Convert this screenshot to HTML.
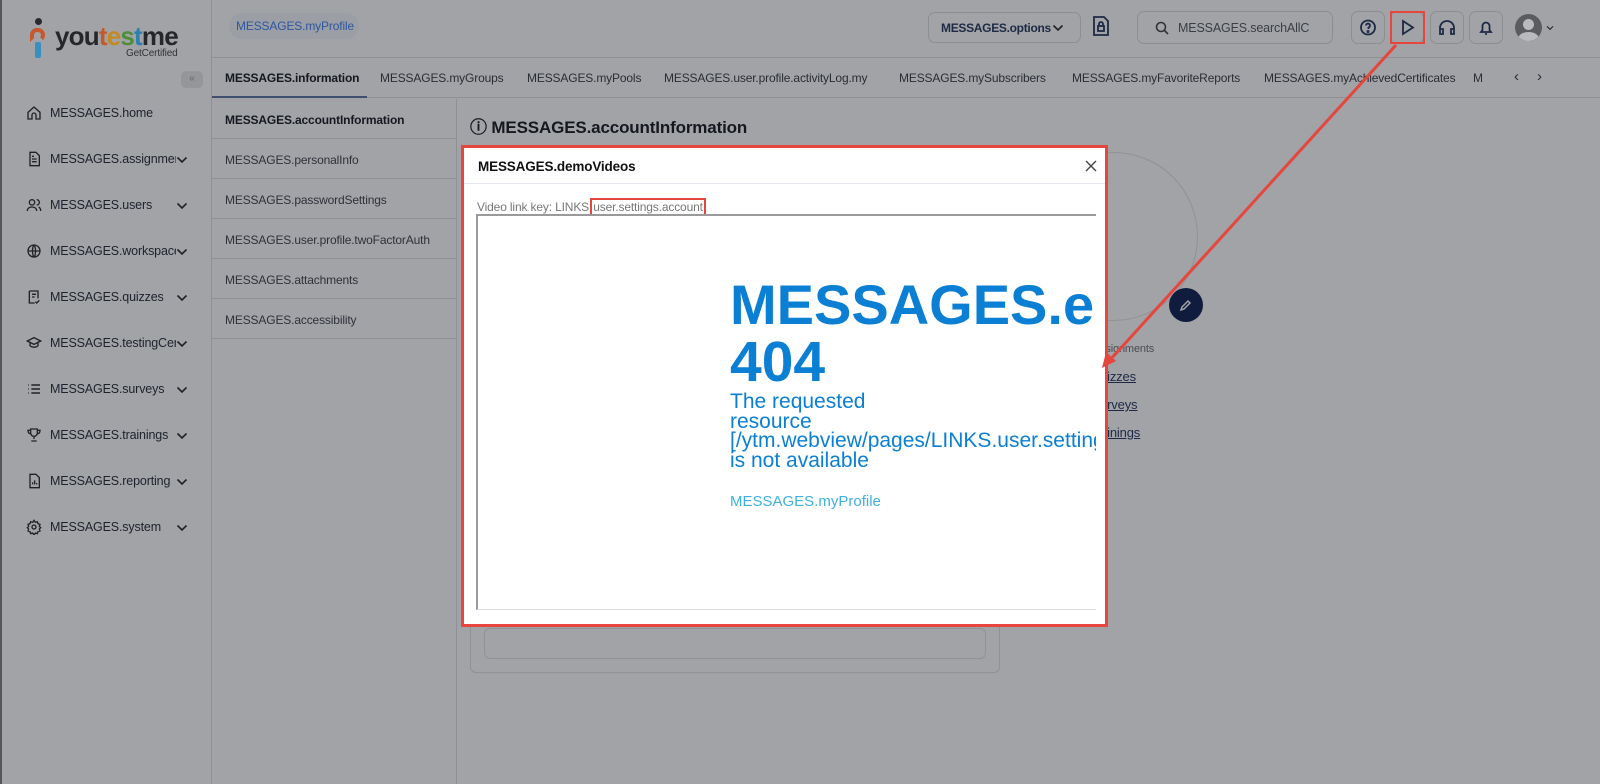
<!DOCTYPE html>
<html><head><meta charset="utf-8"><style>
*{box-sizing:border-box;margin:0;padding:0}
body{width:1600px;height:784px;overflow:hidden;background:#a1a3a7;font-family:"Liberation Sans",sans-serif;color:#1e222b;position:relative;letter-spacing:-0.15px}
.abs{position:absolute}
.side{left:0;top:0;width:212px;height:784px;border-right:1px solid #8e9094;border-left:2px solid #55575b}
.nav{position:absolute;left:24px;font-size:12.5px;color:#1e222b;display:flex;align-items:center;gap:8px;width:150px;overflow:hidden;white-space:nowrap;height:20px}
.nav svg{width:16px;height:16px;flex:none}
.chev{position:absolute;left:174px;width:12px;height:8px}
.top{left:212px;top:0;right:0;height:58px;border-bottom:1px solid #8e9094}
.tabs{left:212px;top:58px;right:0;height:40px;border-bottom:1px solid #8e9094;font-size:12px;color:#2a2d34}
.tabs span{position:absolute;top:13px;white-space:nowrap}
.sub{left:212px;top:99px;width:245px;height:685px;border-right:1px solid #8e9094}
.sub div{height:40px;border-bottom:1px solid #8e9094;font-size:12px;padding:14px 0 0 13px;color:#2e3138}
.btn{position:absolute;top:11px;width:34px;height:33px;border:1px solid #8c8e92;border-radius:7px}
</style></head><body>
<svg width="0" height="0" style="position:absolute"><defs><symbol id="cv" viewBox="0 0 12 8"><path d="M1.5 1.5l4.5 4.5 4.5-4.5" fill="none" stroke="#222" stroke-width="1.6"/></symbol></defs></svg>
<div class="abs side">
 <div class="abs" style="left:28px;top:18px;width:16px;height:44px">
  <div class="abs" style="left:5px;top:0;width:7px;height:7px;border-radius:50%;background:#2a2a2a"></div>
  <div class="abs" style="left:0;top:10px;width:15px;height:14px;border:4px solid #c7572e;border-radius:8px 8px 8px 0;border-bottom-color:transparent"></div>
  <div class="abs" style="left:5px;top:24px;width:6px;height:16px;background:#3a8fc1;border-radius:2px"></div>
 </div>
 <div class="abs" style="left:53px;top:21px;font-size:26px;font-weight:bold;letter-spacing:-0.8px;color:#26272a">you<span style="color:#c25b2c">t</span><span style="color:#c48a22">e</span><span style="color:#4e8d3a">s</span><span style="color:#2c7fae">t</span>me</div>
 <div class="abs" style="left:124px;top:48px;font-size:10px;color:#333">GetCertified</div>
 <div class="abs" style="left:179px;top:71px;width:22px;height:17px;background:#94969a;border-radius:5px;font-size:10px;color:#666;text-align:center;line-height:16px">«</div>
 <div class="nav" style="top:103px"><svg viewBox="0 0 24 24" fill="none" stroke="#222" stroke-width="2"><path d="M3 11l9-8 9 8v10h-6v-6a3 3 0 0 0-6 0v6H3z"/></svg>MESSAGES.home</div>
 <div class="nav" style="top:149px"><svg viewBox="0 0 24 24" fill="none" stroke="#222" stroke-width="2"><path d="M6 2h9l5 5v15H6z M9 12h7M9 16h7M9 8h3"/></svg>MESSAGES.assignments</div><svg class="chev" style="top:156px"><use href="#cv"/></svg>
 <div class="nav" style="top:195px"><svg viewBox="0 0 24 24" fill="none" stroke="#222" stroke-width="2"><circle cx="9" cy="8" r="4"/><path d="M2 21c0-4 3-6 7-6s7 2 7 6M16 4a4 4 0 0 1 0 8M19 15c2 1 3 3 3 6"/></svg>MESSAGES.users</div><svg class="chev" style="top:202px"><use href="#cv"/></svg>
 <div class="nav" style="top:241px"><svg viewBox="0 0 24 24" fill="none" stroke="#222" stroke-width="2"><circle cx="12" cy="12" r="9"/><path d="M3 12h18M12 3c3 3 3 15 0 18M12 3c-3 3-3 15 0 18"/></svg>MESSAGES.workspace</div><svg class="chev" style="top:248px"><use href="#cv"/></svg>
 <div class="nav" style="top:287px"><svg viewBox="0 0 24 24" fill="none" stroke="#222" stroke-width="2"><path d="M5 3h13v11M5 3v18h8M9 8h6M9 12h4M14 19l2 2 4-4"/></svg>MESSAGES.quizzes</div><svg class="chev" style="top:294px"><use href="#cv"/></svg>
 <div class="nav" style="top:333px"><svg viewBox="0 0 24 24" fill="none" stroke="#222" stroke-width="2"><path d="M2 9l10-5 10 5-10 5z M6 11v5c3 3 9 3 12 0v-5"/></svg>MESSAGES.testingCenter</div><svg class="chev" style="top:340px"><use href="#cv"/></svg>
 <div class="nav" style="top:379px"><svg viewBox="0 0 24 24" fill="none" stroke="#222" stroke-width="2.4"><path d="M3 6h1M3 12h1M3 18h1M8 6h13M8 12h13M8 18h13"/></svg>MESSAGES.surveys</div><svg class="chev" style="top:386px"><use href="#cv"/></svg>
 <div class="nav" style="top:425px"><svg viewBox="0 0 24 24" fill="none" stroke="#222" stroke-width="2"><path d="M7 3h10v6a5 5 0 0 1-10 0zM7 5H3c0 4 2 5 4 5M17 5h4c0 4-2 5-4 5M12 14v4M8 21h8"/></svg>MESSAGES.trainings</div><svg class="chev" style="top:432px"><use href="#cv"/></svg>
 <div class="nav" style="top:471px"><svg viewBox="0 0 24 24" fill="none" stroke="#222" stroke-width="2"><path d="M6 2h9l5 5v15H6z M10 17v-3M13 17v-6M16 17v-2"/></svg>MESSAGES.reporting</div><svg class="chev" style="top:478px"><use href="#cv"/></svg>
 <div class="nav" style="top:517px"><svg viewBox="0 0 24 24" fill="none" stroke="#222" stroke-width="2"><circle cx="12" cy="12" r="3"/><path d="M12 2l2 3 3-1 1 3 3 1-1 3 2 2-2 2 1 3-3 1-1 3-3-1-2 3-2-3-3 1-1-3-3-1 1-3-2-2 2-2-1-3 3-1 1-3 3 1z"/></svg>MESSAGES.system</div><svg class="chev" style="top:524px"><use href="#cv"/></svg>
</div>
<div class="abs top">
 <div class="abs" style="left:17px;top:13px;width:130px;height:26px;background:#9b9ea4;border-radius:13px;font-size:12px;color:#2f56a0;line-height:26px;padding-left:7px">MESSAGES.myProfile</div>
 <div class="abs" style="left:716px;top:12px;width:153px;height:31px;border:1px solid #8c8e92;border-radius:7px;font-size:12px;font-weight:bold;color:#1e2a45;line-height:30px;padding-left:12px;letter-spacing:-0.3px">MESSAGES.options</div>
 <svg class="abs" style="left:840px;top:24px" width="12" height="8"><use href="#cv"/></svg>
 <svg class="abs" style="left:880px;top:15px" width="18" height="22" viewBox="0 0 18 22" fill="none" stroke="#1e2a45" stroke-width="1.8"><path d="M2 2h10l4 4v14H2z"/><rect x="6" y="11" width="6" height="5"/><path d="M7 11V9a2 2 0 0 1 4 0v2"/></svg>
 <div class="abs" style="left:925px;top:11px;width:196px;height:33px;border:1px solid #8c8e92;border-radius:7px;font-size:12.5px;color:#3b3e45;line-height:32px;padding-left:40px">MESSAGES.searchAllC</div>
 <svg class="abs" style="left:943px;top:21px" width="14" height="14" viewBox="0 0 14 14" fill="none" stroke="#333" stroke-width="1.6"><circle cx="6" cy="6" r="4.5"/><path d="M9.5 9.5l3.5 3.5"/></svg>
 <div class="btn" style="left:1139px"><svg width="32" height="31" viewBox="0 0 32 31" fill="none" stroke="#1e2a45" stroke-width="1.8"><circle cx="16" cy="15.5" r="7"/><path d="M14 13.5a2 2 0 1 1 2.5 2v1.5"/><circle cx="16" cy="19.5" r=".6"/></svg></div>
 <div class="btn" style="left:1178px"><svg width="32" height="31" viewBox="0 0 32 31" fill="none" stroke="#1e2a45" stroke-width="1.8"><path d="M12 9l10 6.5-10 6.5z"/></svg></div>
 <div class="abs" style="left:1178px;top:11px;width:35px;height:33px;border:2px solid #e5463d"></div>
 <div class="btn" style="left:1218px"><svg width="32" height="31" viewBox="0 0 32 31" fill="none" stroke="#1e2a45" stroke-width="1.8"><path d="M9 21v-5a7 7 0 0 1 14 0v5M9 17h3v5H9zM20 17h3v5h-3z"/></svg></div>
 <div class="btn" style="left:1257px"><svg width="32" height="31" viewBox="0 0 32 31" fill="none" stroke="#1e2a45" stroke-width="1.8"><path d="M11 20h10l-1.5-2v-4a3.5 3.5 0 0 0-7 0v4zM15 22h2"/></svg></div>
 <div class="abs" style="left:1303px;top:14px;width:27px;height:27px;border-radius:50%;background:#5a5c60;overflow:hidden"><div class="abs" style="left:8px;top:5px;width:11px;height:11px;border-radius:50%;background:#b8babd"></div><div class="abs" style="left:3px;top:18px;width:21px;height:14px;border-radius:50%;background:#b8babd"></div></div>
 <svg class="abs" style="left:1334px;top:25px" width="8" height="6" viewBox="0 0 12 8"><use href="#cv"/></svg>
</div>
<div class="abs tabs">
 <span style="left:13px;font-weight:bold;color:#15181f">MESSAGES.information</span>
 <div class="abs" style="left:0;top:38px;width:155px;height:2px;background:#3f4e6a"></div>
 <span style="left:168px">MESSAGES.myGroups</span><span style="left:315px">MESSAGES.myPools</span><span style="left:452px">MESSAGES.user.profile.activityLog.my</span><span style="left:687px">MESSAGES.mySubscribers</span><span style="left:860px">MESSAGES.myFavoriteReports</span><span style="left:1052px">MESSAGES.myAchievedCertificates</span><span style="left:1261px">M</span><span style="left:1302px;font-size:15px;top:10px">‹</span><span style="left:1325px;font-size:15px;top:10px">›</span>
</div>
<div class="abs sub">
 <div style="font-weight:bold;color:#15181f">MESSAGES.accountInformation</div>
 <div>MESSAGES.personalInfo</div><div>MESSAGES.passwordSettings</div><div>MESSAGES.user.profile.twoFactorAuth</div><div>MESSAGES.attachments</div><div>MESSAGES.accessibility</div>
</div>
<div class="abs" style="left:470px;top:113px;font-size:17px;font-weight:bold;color:#15181f">ⓘ MESSAGES.accountInformation</div>
<div class="abs" style="left:1029px;top:152px;width:169px;height:169px;border-radius:50%;border:1px solid #909296"></div>
<div class="abs" style="left:1169px;top:288px;width:34px;height:34px;border-radius:50%;background:#0f1c3d"></div>
<svg class="abs" style="left:1178px;top:297px" width="16" height="16" viewBox="0 0 16 16" fill="none" stroke="#a1a3a7" stroke-width="1.5"><path d="M3 13l1-3 6-6 2 2-6 6z"/></svg>
<div class="abs" style="left:1100px;top:343px;font-size:11px;color:#4a4d53">ssignments</div>
<div class="abs" style="left:1100px;top:369px;font-size:13px;color:#1e2a45;text-decoration:underline">uizzes</div>
<div class="abs" style="left:1100px;top:397px;font-size:13px;color:#1e2a45;text-decoration:underline">urveys</div>
<div class="abs" style="left:1100px;top:425px;font-size:13px;color:#1e2a45;text-decoration:underline">ainings</div>
<div class="abs" style="left:470px;top:600px;width:530px;height:73px;border:1px solid #909296;border-radius:6px"></div>
<div class="abs" style="left:484px;top:628px;width:502px;height:31px;border:1px solid #909296;border-radius:6px"></div>
<div class="abs" style="left:461px;top:145px;width:647px;height:482px;border:3px solid #e5463d;background:#fff">
 <div class="abs" style="left:0;top:0;right:0;height:36px;border-bottom:1px solid #e3e6ec"></div>
 <div class="abs" style="left:14px;top:11px;font-size:13.5px;font-weight:bold;color:#111">MESSAGES.demoVideos</div>
 <svg class="abs" style="left:621px;top:12px" width="12" height="12" viewBox="0 0 12 12" stroke="#444" stroke-width="1.4"><path d="M1 1l10 10M11 1L1 11"/></svg>
 <div class="abs" style="left:13px;top:52px;font-size:12px;color:#777">Video link key: LINKS.<span style="outline:2px solid #e5463d;padding:0 1px">user.settings.account</span></div>
 <div class="abs" style="left:12px;top:66px;width:620px;height:396px;border-top:2px solid #9a9a9a;border-left:2px solid #9a9a9a;border-bottom:1px solid #ddd;overflow:hidden">
  <div class="abs" style="left:252px;top:60px;white-space:nowrap;color:#0a7fd3;letter-spacing:0">
   <div style="font-size:56px;font-weight:bold;line-height:58px">MESSAGES.error</div>
   <div style="font-size:57px;font-weight:bold;line-height:56px">404</div>
   <div style="font-size:21px;line-height:19.7px;margin-top:2px">The requested<br>resource<br>[/ytm.webview/pages/LINKS.user.settings.account]<br>is not available</div>
   <div style="font-size:15px;color:#3fb0e0;margin-top:22px">MESSAGES.myProfile</div>
  </div>
 </div>
</div>
<svg class="abs" style="left:0;top:0" width="1600" height="784"><line x1="1396" y1="45" x2="1110" y2="360" stroke="#e5463d" stroke-width="3"/><path d="M1102 368l4-16 10 9z" fill="#e5463d"/></svg>
</body></html>
